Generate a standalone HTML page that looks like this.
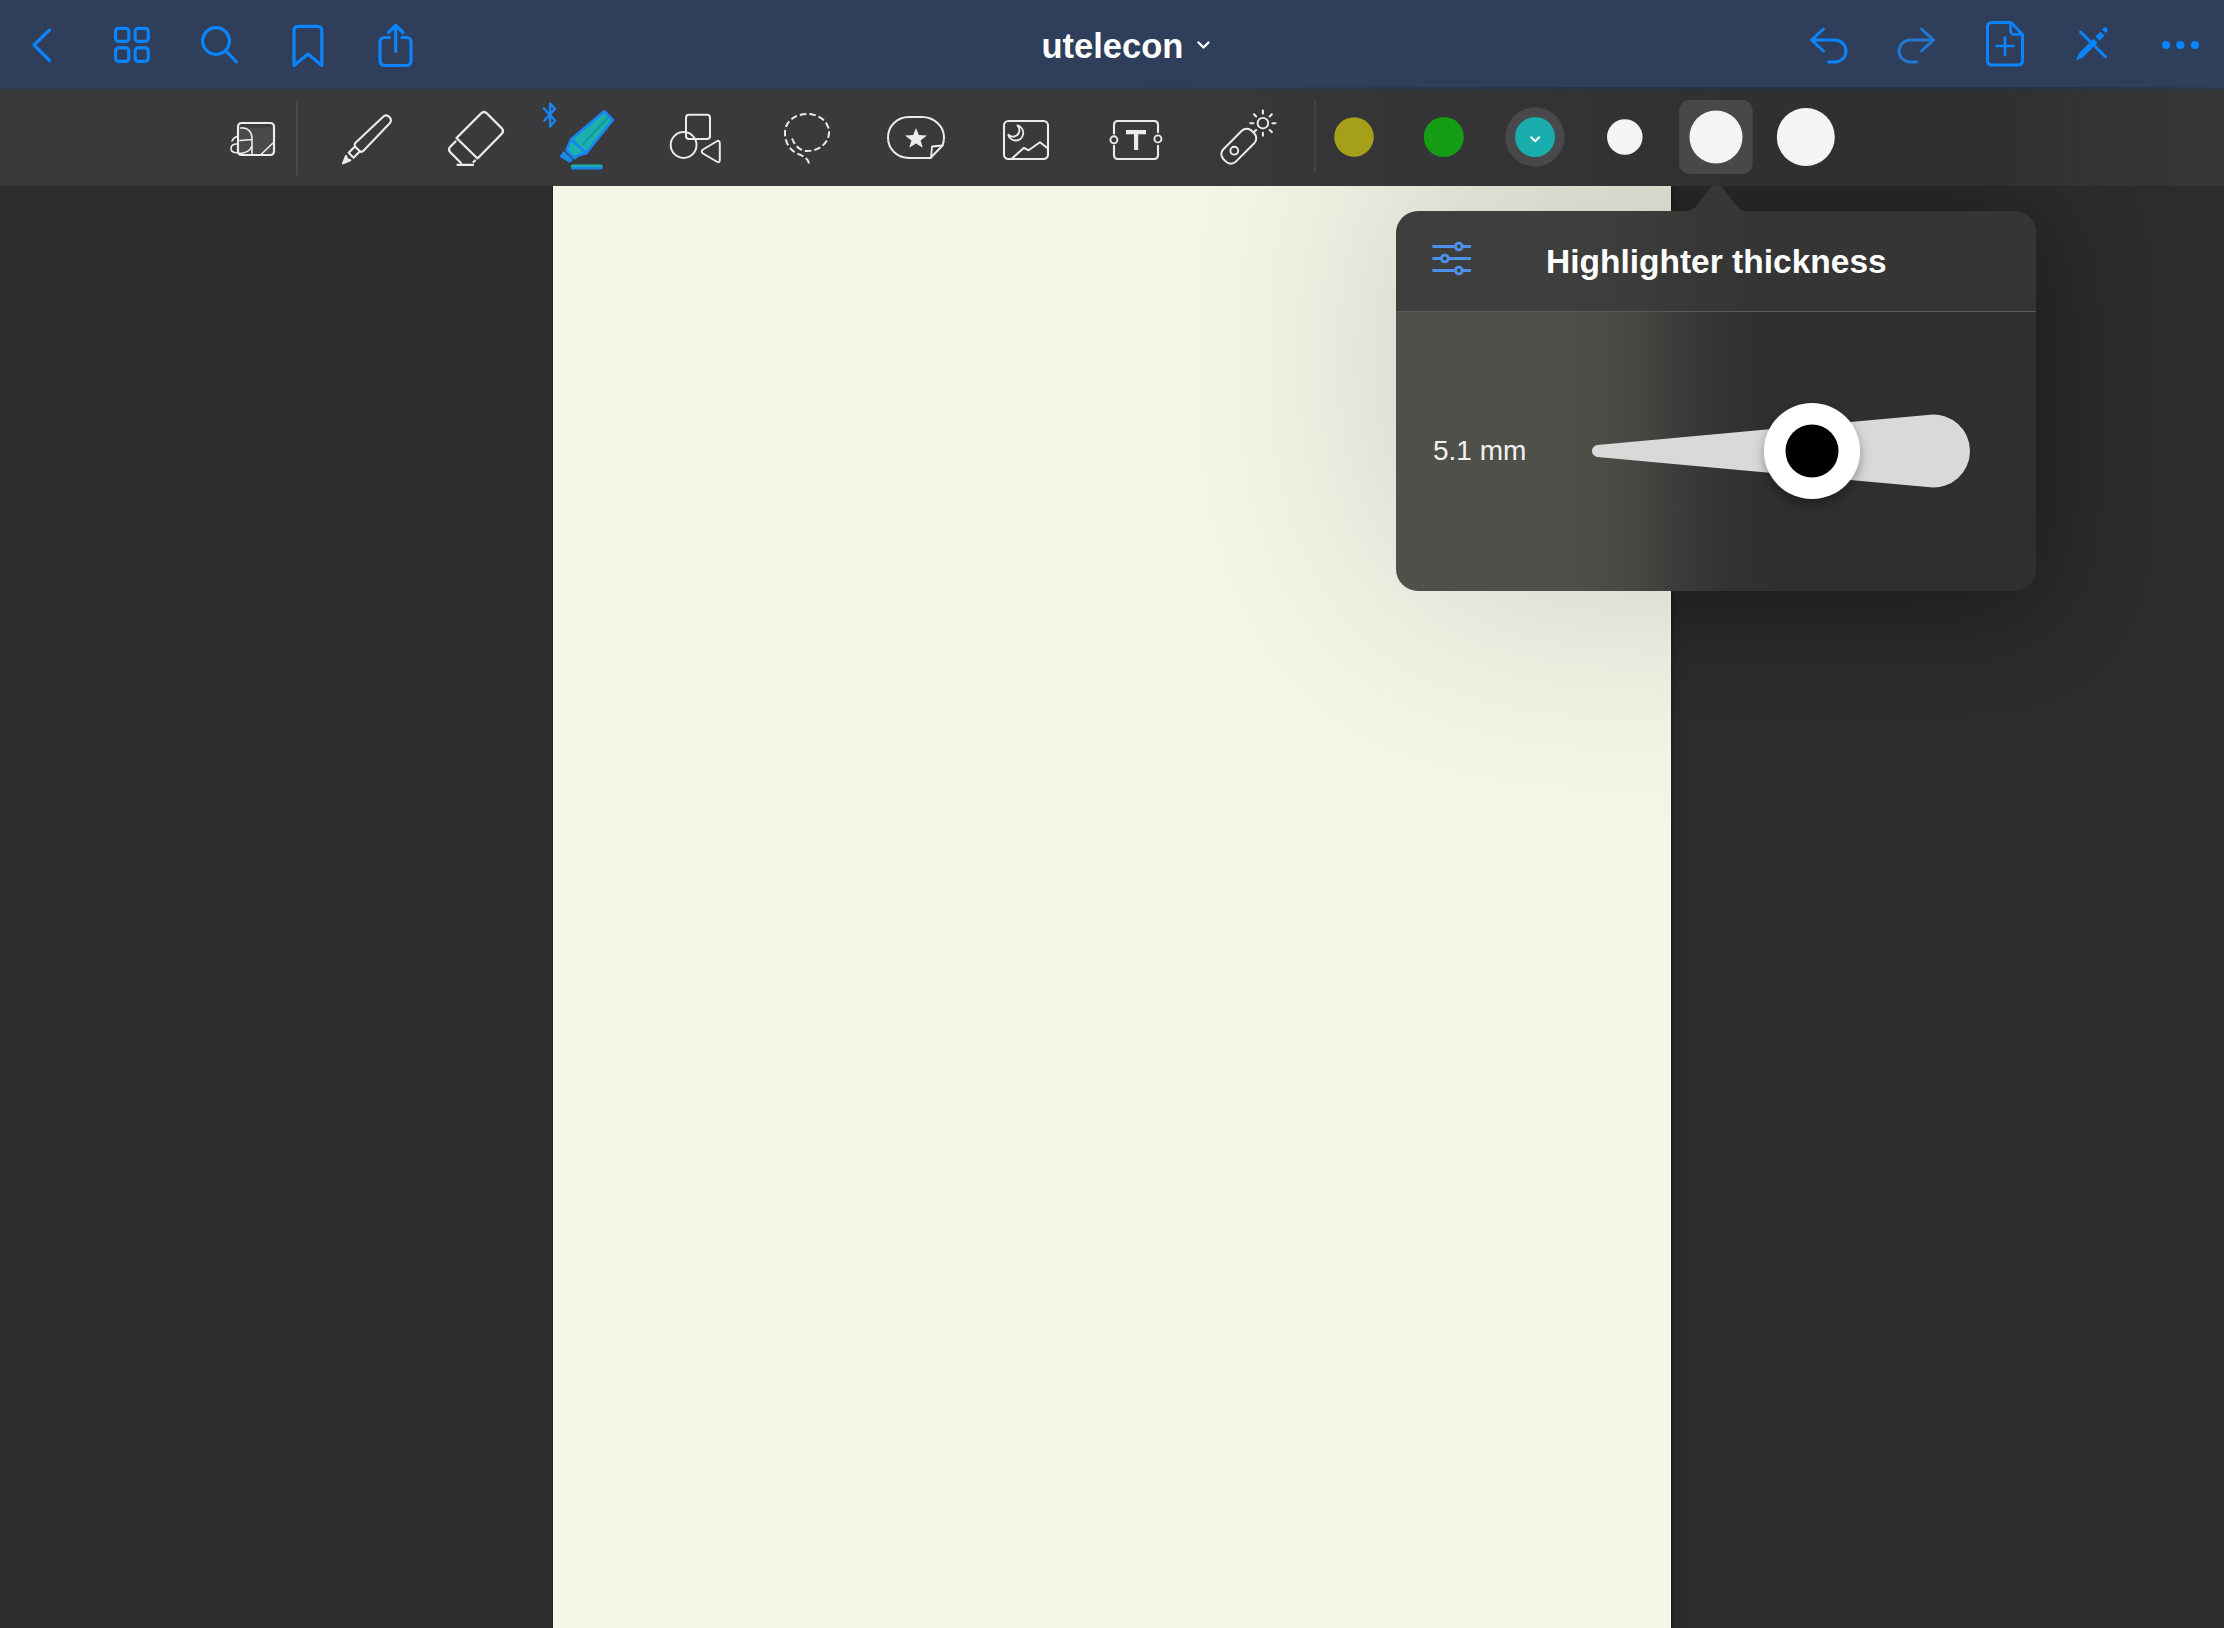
<!DOCTYPE html>
<html><head><meta charset="utf-8">
<style>
html,body{margin:0;padding:0;width:2224px;height:1628px;overflow:hidden;background:#2c2c2e;font-family:"Liberation Sans",sans-serif;}
.abs{position:absolute;}
#nav{left:0;top:0;width:2224px;height:88px;background:#2f3e5a;}
#tools{left:0;top:87px;width:2224px;height:99px;background:linear-gradient(to bottom,#2f3e5a 0px,#333b4a 2px,#38393e 4px,#3a3a3c 6px);}
#paper{left:553px;top:186px;width:1118px;height:1442px;background:#f5f5e8;}
#title{left:1041.5px;top:25.5px;font-size:34.5px;font-weight:bold;color:#fff;line-height:40px;}
svg{position:absolute;left:0;top:0;overflow:visible;}

#pop{left:1396px;top:211px;width:640px;height:380px;border-radius:22px;overflow:hidden;}
#pophead{left:0;top:0;width:640px;height:100px;background:linear-gradient(to right,rgb(62, 62, 60) 0px,rgb(62,62,60) 100px,rgb(62,62,60) 110px,rgb(62,62,60) 120px,rgb(62,62,60) 130px,rgb(62,62,60) 140px,rgb(62,62,60) 150px,rgb(62,62,60) 160px,rgb(62,62,60) 170px,rgb(62,62,60) 180px,rgb(61,61,60) 190px,rgb(61,61,59) 200px,rgb(61,61,59) 210px,rgb(60,60,59) 220px,rgb(60,60,58) 230px,rgb(59,59,58) 240px,rgb(59,59,57) 250px,rgb(58,58,57) 260px,rgb(57,57,56) 270px,rgb(57,57,56) 280px,rgb(56,56,55) 290px,rgb(55,55,55) 300px,rgb(55,55,54) 310px,rgb(54,54,54) 320px,rgb(54,54,54) 330px,rgb(54,54,54) 340px,rgb(53,53,53) 350px,rgb(53,53,53) 360px,rgb(53,53,53) 370px,rgb(53,53,53) 380px,rgb(53,53,53) 390px,rgb(53,53,53) 400px,rgb(53,53,53) 410px,rgb(53,53,53) 420px,rgb(53,53,53) 430px,rgb(53,53,53) 440px,rgb(53,53,53) 450px,rgb(53, 53, 53) 640px);}
#popsep{left:0;top:100px;width:640px;height:1px;background:#5a5a58;}
#popbody{left:0;top:101px;width:640px;height:279px;background:linear-gradient(to right,rgb(80, 80, 74) 0px,rgb(80,80,74) 100px,rgb(80,80,74) 110px,rgb(80,80,74) 120px,rgb(80,80,74) 130px,rgb(80,80,74) 140px,rgb(80,80,74) 150px,rgb(79,79,74) 160px,rgb(79,79,73) 170px,rgb(79,79,73) 180px,rgb(78,78,72) 190px,rgb(77,77,72) 200px,rgb(76,76,71) 210px,rgb(74,74,70) 220px,rgb(73,73,68) 230px,rgb(71,71,67) 240px,rgb(68,68,65) 250px,rgb(66,66,63) 260px,rgb(63,63,61) 270px,rgb(60,60,59) 280px,rgb(58,58,57) 290px,rgb(56,56,55) 300px,rgb(54,54,53) 310px,rgb(52,52,52) 320px,rgb(51,51,51) 330px,rgb(49,49,50) 340px,rgb(49,49,49) 350px,rgb(48,48,49) 360px,rgb(48,48,49) 370px,rgb(47,47,48) 380px,rgb(47,47,48) 390px,rgb(47,47,48) 400px,rgb(47,47,48) 410px,rgb(47,47,48) 420px,rgb(47,47,48) 430px,rgb(47,47,48) 440px,rgb(47,47,48) 450px,rgb(47, 47, 48) 640px);}
#poptitle{left:150px;top:31px;font-size:33.5px;font-weight:bold;color:#fff;line-height:40px;}
#mm{left:37px;top:225px;font-size:28px;color:#f2f2f2;line-height:30px;}
</style></head>
<body>
<div id="nav" class="abs"></div>
<div id="tools" class="abs"></div>
<div id="paper" class="abs"></div>
<div class="abs" style="left:552px;top:186px;width:1px;height:1442px;background:#1f201c;"></div>
<div class="abs" style="left:553px;top:186px;width:1px;height:1442px;background:#fbfbef;"></div>
<div class="abs" style="left:1670px;top:186px;width:1px;height:1442px;background:#fbfbef;"></div>
<div class="abs" style="left:1671px;top:186px;width:14px;height:1442px;background:linear-gradient(to right,rgba(0,0,0,0.35) 0px,rgba(0,0,0,0.35) 1px,rgba(0,0,0,0.10) 2px,rgba(0,0,0,0.06) 8px,rgba(0,0,0,0) 14px);"></div>
<svg id="shsvg" width="2224" height="1628" viewBox="0 0 2224 1628" style="position:absolute;left:0;top:0;">
<defs>
  <clipPath id="cpPaper"><rect x="553" y="186" width="1118" height="1442"/></clipPath>
  <clipPath id="cpDark"><rect x="1671" y="186" width="553" height="1442"/></clipPath>
  <clipPath id="cpTool"><rect x="0" y="87" width="2224" height="99"/></clipPath>
  <filter id="blurA" x="-100%" y="-100%" width="300%" height="300%"><feGaussianBlur stdDeviation="55"/></filter>
  <filter id="blurB" x="-100%" y="-100%" width="300%" height="300%"><feGaussianBlur stdDeviation="125"/></filter>
  <linearGradient id="tgrad" x1="0" y1="0" x2="1" y2="0">
    <stop offset="0" stop-color="#000" stop-opacity="0"/>
    <stop offset="0.5" stop-color="#000" stop-opacity="0"/>
    <stop offset="0.62" stop-color="#000" stop-opacity="0.08"/>
    <stop offset="0.78" stop-color="#000" stop-opacity="0.17"/>
    <stop offset="0.9" stop-color="#000" stop-opacity="0.17"/>
    <stop offset="1" stop-color="#000" stop-opacity="0.05"/>
  </linearGradient>
</defs>
<rect x="0" y="87" width="2224" height="99" fill="url(#tgrad)"/>
<g clip-path="url(#cpDark)"><rect x="1396" y="216" width="640" height="385" rx="22" fill="#000" opacity="0.45" filter="url(#blurA)"/></g>
<g clip-path="url(#cpPaper)"><rect x="1396" y="120" width="640" height="470" rx="22" fill="#000" opacity="0.17" filter="url(#blurB)"/></g>
</svg>
<div id="title" class="abs">utelecon</div>
<svg width="2224" height="1628" viewBox="0 0 2224 1628">
<g fill="none" stroke="#0a84ff" stroke-width="3.2" stroke-linecap="round" stroke-linejoin="round">
  <path d="M49.5,30 L34,45 L49.5,60.5"/>
  <rect x="115.6" y="28.3" width="13.2" height="13" rx="3"/>
  <rect x="135.1" y="28.3" width="13.2" height="13" rx="3"/>
  <rect x="115.6" y="47.9" width="13.2" height="13.4" rx="3"/>
  <rect x="135.1" y="47.9" width="13.2" height="13.4" rx="3"/>
  <circle cx="216" cy="41" r="13.4"/>
  <path d="M226,51 L236.3,61.8"/>
  <path d="M294,65.5 L294,31 Q294,26.4 298.5,26.4 L317.3,26.4 Q321.8,26.4 321.8,31 L321.8,65.5 L308,54.1 Z"/>
  <path d="M389.5,37.5 L385,37.5 Q380,37.5 380,42.5 L380,60.5 Q380,65.5 385,65.5 L406,65.5 Q411,65.5 411,60.5 L411,42.5 Q411,37.5 406,37.5 L402,37.5"/>
  <path d="M395.7,51.5 L395.7,25.5 M388.5,32.5 L395.7,25.5 L403,32.5"/>
  <path d="M1198.5,42.5 L1203.5,47.5 L1208.5,42.5" stroke="#fff" stroke-width="2.4"/>
  <path d="M1823.5,29 L1811.5,40 L1823.5,51 M1811.5,40 L1835,40 A11,11 0 0 1 1835,62 L1828.5,62" stroke-width="3"/>
  <path d="M1921.5,29 L1933.5,40 L1921.5,51 M1933.5,40 L1910,40 A11,11 0 0 0 1910,62 L1916.5,62" stroke="#2277d0" stroke-width="3"/>
  <path d="M2011,22.5 L1992,22.5 Q1987.5,22.5 1987.5,27 L1987.5,60.5 Q1987.5,65 1992,65 L2018,65 Q2022.5,65 2022.5,60.5 L2022.5,34.5 Z" stroke-width="3"/>
  <path d="M2010.5,23.5 L2010.5,30 Q2010.5,34.5 2015,34.5 L2022,34.5" stroke-width="2.6"/>
  <path d="M1996.5,46 L2013.5,46 M2005,37.5 L2005,55" stroke-width="2.6"/>
  <path d="M2080.5,32 L2105.5,56.8" stroke-width="3"/>
</g>
<g fill="#0a84ff">
  <path d="M2076,60.5 L2078.5,53.8 L2093.5,38.8 L2097.5,42.8 L2082.5,57.8 Z"/>
  <path d="M2095.5,36.8 L2100.5,31.8 L2104.5,35.8 L2099.5,40.8 Z"/>
  <path d="M2102,29.5 L2103.5,28 Q2105,26.5 2106.5,28 L2107,28.5 Q2108.5,30 2107,31.5 L2105.5,33 Z"/>
  <circle cx="2166.1" cy="45" r="4.1"/>
  <circle cx="2180.4" cy="45" r="4.1"/>
  <circle cx="2194.9" cy="45" r="4.1"/>
</g>

<g fill="none" stroke="#ececec" stroke-width="2.1" stroke-linecap="round" stroke-linejoin="round">
  <!-- handwriting -->
  <rect x="239.5" y="127.5" width="33" height="26" fill="#4a4a4c" stroke="none"/>
  <rect x="238" y="123" width="36" height="32" rx="3.5" stroke-width="2.2"/>
  <path d="M240.5,128 C247.5,127 252,131.5 252,139 L252,154 M240,140.5 L252,139.5 M252,146 C250,151 245,153.5 238.5,153.5" stroke-width="1.6"/>
  <path d="M232,141 C233,138.5 235,137 237,136.5 M237,144 C233,144 231,146 231,148.5 C231,151 233,152.7 237,152.7" stroke-width="1.6"/>
  <path d="M261.5,154 L273,143" stroke-width="1.6"/>
  <!-- separator -->
  <path d="M297,102 L297,175" stroke="#505052" stroke-width="1.5"/>
  <!-- pen -->
  <g transform="translate(343,163.3) rotate(-45)">
    <path d="M11.5,-3.5 L20.4,-3.5 L20.4,3.5 L11.5,3.5 Z"/>
    <path d="M20.4,-3.5 Q21,-5.6 23,-5.6 L61,-4.6 Q65.5,-4.4 65.5,0 Q65.5,4.6 61,4.8 L23,5.6 Q21,5.6 20.4,3.5"/>
    <path d="M0,0 L7.3,-3 L5.8,0 L7.3,3 Z" fill="#ececec"/>
  </g>
  <!-- eraser -->
  <path d="M456.5,138 L481,113.5 Q484,110.5 487,113.5 L501.5,128 Q504.5,131 501.5,134 L477.5,158.5 Z" stroke-width="2.3"/>
  <path d="M455.5,141.5 L450.5,146.5 Q447.5,149.5 450.5,152.5 L461,163 M473.5,162 L475,160.5" stroke-width="2.3"/>
  <path d="M457.5,164.8 L473,164.8" stroke-width="2.3"/>
  <!-- shapes -->
  <rect x="686" y="114.8" width="24" height="24.2" rx="3" stroke-width="2"/>
  <circle cx="683.6" cy="145" r="12.9" stroke-width="2"/>
  <path d="M703,149.5 L716.5,141.5 Q719.8,139.5 719.8,143.5 L719.8,159.5 Q719.8,163.5 716.5,161.5 L703,153.5 Q700.5,151.5 703,149.5 Z" stroke-width="2"/>
  <!-- lasso -->
  <path d="M809,163.5 C808,158 803,156 797,153.5 C789,149.5 785,142 785,132.5 C785,121.5 795,114 807,114 C819,114 829,121.5 829,132.5 C829,143 819,151 807,151 C800,151 795,146 792,138.5" stroke-width="2" stroke-dasharray="6.5 3" stroke-linecap="butt"/>
  <!-- sticker -->
  <path d="M930.5,158 L909,158 C897,158 888,149 888,137.5 C888,126 897,117 909,117 L922,117 C934,117 944,126 944,137.5 C944,140 943.5,143 942.5,145.5 Z" stroke-width="2"/>
  <path d="M942.5,145.5 L932,146.5 L931,158" stroke-width="1.8"/>
  <path d="M916,127.9 L918.8,135 L926.9,135.4 L920.6,140.4 L922.8,147.8 L916,143.6 L909.2,147.8 L911.4,140.4 L905,135.4 L913.2,135 Z" fill="#ececec" stroke="none"/>
  <!-- image -->
  <rect x="1004" y="121" width="44" height="38" rx="4.5" stroke-width="2.1"/>
  <path d="M1017.5,125.5 A7.6,7.6 0 1 1 1008.3,134.8 A6.5,6.5 0 0 0 1017.5,125.5 Z" stroke-width="1.9"/>
  <path d="M1012.5,158 L1024,147.8 L1028.6,150.3 L1040,142.2 L1047,147.8" stroke-width="2"/>
  <!-- text -->
  <path d="M1114,133.5 L1114,125 Q1114,121 1118,121 L1154,121 Q1158,121 1158,125 L1158,132.3 M1158,145.8 L1158,155 Q1158,159 1154,159 L1118,159 Q1114,159 1114,155 L1114,145.8" stroke-width="2.1"/>
  <circle cx="1113.9" cy="139.8" r="3.5" stroke-width="1.9"/>
  <circle cx="1157.9" cy="138.9" r="3.5" stroke-width="1.9"/>
  <path d="M1126,130 L1146,130 L1146,134.2 L1138.2,134.2 L1138.2,150 L1134,150 L1134,134.2 L1126,134.2 Z" fill="#ececec" stroke="none"/>
  <!-- laser -->
  <g transform="translate(1238.8,146.2) rotate(-45)">
    <rect x="-20" y="-8.8" width="40" height="17.6" rx="7" stroke-width="2"/>
  </g>
  <circle cx="1234.3" cy="150.7" r="3.9" stroke-width="1.9"/>
  <circle cx="1262.9" cy="123.2" r="5.3" stroke-width="1.9"/>
  <path d="M1272.5,123.2 L1275.5,123.2 M1269.7,130.0 L1271.8,132.1 M1262.9,132.8 L1262.9,135.8 M1256.1,130.0 L1254.0,132.1 M1253.3,123.2 L1250.3,123.2 M1256.1,116.4 L1254.0,114.3 M1262.9,113.6 L1262.9,110.6 M1269.7,116.4 L1271.8,114.3" stroke-width="2.1"/>
  <!-- separator 2 -->
  <path d="M1315,101.5 L1315,171.5" stroke="#48484a" stroke-width="1.5"/>
</g>
<!-- highlighter -->
<g stroke-linejoin="round" stroke-linecap="round">
  <path d="M604.3,111.3 L612.8,120 L586,153.3 L571.2,139.2 Z" fill="#19b0ae" stroke="#1a84f0" stroke-width="2.7"/>
  <path d="M571.2,139.2 L566.6,150 L574.5,158.3 L577.5,155.8 L586,153.3 Z" fill="#19b0ae" stroke="#1a84f0" stroke-width="2.6"/>
  <path d="M563.8,152.6 L561.2,156.3 L569.4,161.2 L571.3,159.9 Z" fill="#1a9ad0" stroke="#1a84f0" stroke-width="2.4"/>
  <path d="M583,144 L608,117.5" stroke="#178f98" stroke-width="2.2" opacity="0.7"/>
  <path d="M572.6,166.3 L601,166.3" stroke="#19b0ae" stroke-width="3.6" />
  <path d="M572.6,168.3 L601,168.3" stroke="#1a84f0" stroke-width="2.4"/>
  <path d="M543.8,108.4 L555.2,120.5 L550.1,126.6 L550.1,103.6 L555.1,108.9 L544.3,120.5" fill="none" stroke="#1a84f0" stroke-width="2.4"/>
</g>
<!-- colors -->
<circle cx="1354" cy="137" r="19.8" fill="#a69f19"/>
<circle cx="1443.8" cy="137" r="20" fill="#139c14"/>
<circle cx="1535" cy="137" r="29.7" fill="#48484a"/>
<circle cx="1535" cy="137" r="20" fill="#19adad"/>
<path d="M1531.2,137.3 L1535.2,141.2 L1539.2,137.3" fill="none" stroke="#fff" stroke-width="2" stroke-linecap="round" stroke-linejoin="round"/>
<circle cx="1624.8" cy="137" r="17.8" fill="#f4f4f4"/>
<rect x="1679.2" y="100" width="73.4" height="74" rx="10" fill="#48484a"/>
<circle cx="1716" cy="137" r="26.5" fill="#f4f4f4"/>
<circle cx="1805.8" cy="137" r="29" fill="#f4f4f4"/>
</svg>
<div id="pop" class="abs">
  <div id="pophead" class="abs"></div>
  <div id="popsep" class="abs"></div>
  <div id="popbody" class="abs"></div>
  <div id="poptitle" class="abs">Highlighter thickness</div>
  <div id="mm" class="abs">5.1 mm</div>
</div>

<svg width="2224" height="1628" viewBox="0 0 2224 1628" style="position:absolute;left:0;top:0;">
<defs>
  <filter id="thsh" x="-50%" y="-50%" width="200%" height="200%"><feDropShadow dx="0" dy="5" stdDeviation="6" flood-color="#000" flood-opacity="0.35"/></filter>
</defs>
<path d="M1685,211 C1691,211 1694,209 1697,205 L1710.5,187.5 Q1716.5,181.5 1722.5,187.5 L1736,205 C1739,209 1742,211 1749,211 Z" fill="#373737"/>
<g fill="none" stroke="#4c92ea" stroke-width="2.9" stroke-linecap="round">
  <path d="M1433.5,246.5 L1455.3,246.5 M1462.2,246.5 L1469.8,246.5"/>
  <path d="M1433.5,258.5 L1441.4,258.5 M1448.3,258.5 L1469.8,258.5"/>
  <path d="M1433.5,270.5 L1455.3,270.5 M1462.2,270.5 L1469.8,270.5"/>
  <circle cx="1458.8" cy="246.5" r="3.4"/>
  <circle cx="1444.8" cy="258.5" r="3.4"/>
  <circle cx="1458.8" cy="270.5" r="3.4"/>
</g>
<path d="M1597.45,445.02 L1930.2,414.65 A36.5,36.5 0 1 1 1930.2,487.35 L1597.45,456.98 A6,6 0 0 1 1597.45,445.02 Z" fill="#d9d9d9"/>
<circle cx="1812" cy="451" r="48" fill="#fff" filter="url(#thsh)"/>
<circle cx="1812" cy="451" r="26.5" fill="#000"/>
</svg>
</body></html>
